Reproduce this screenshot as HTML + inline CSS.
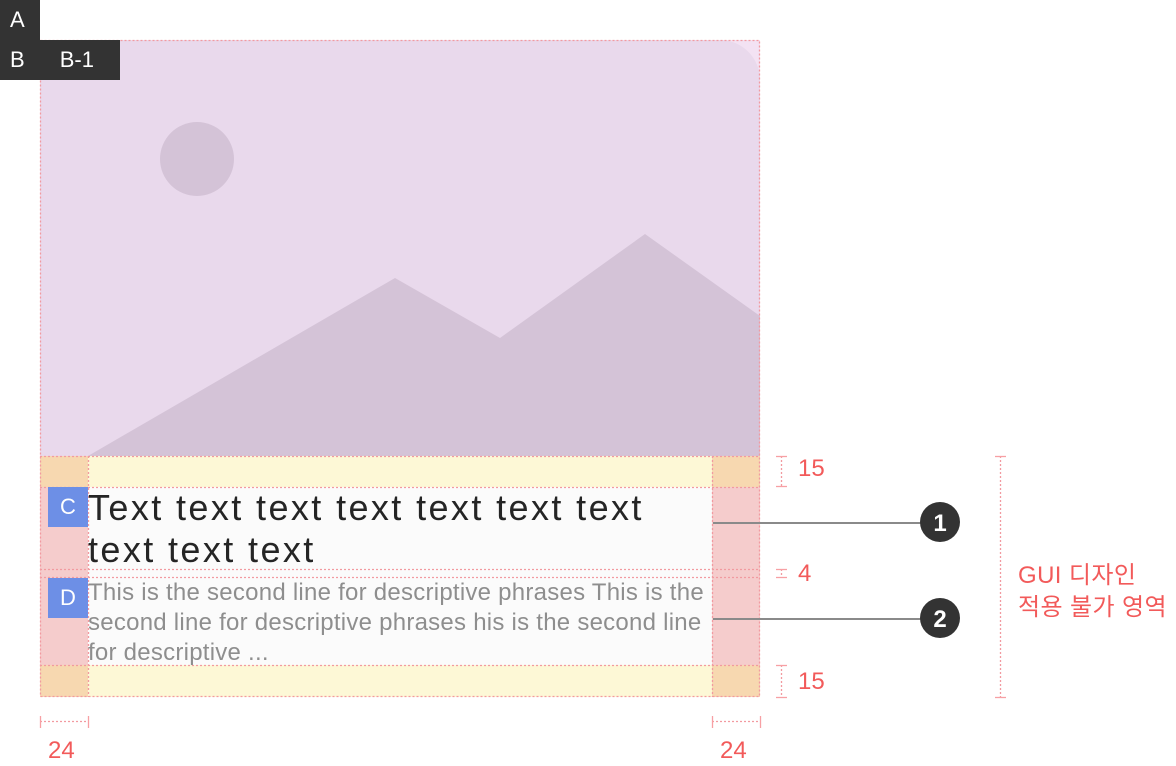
<!DOCTYPE html>
<html><head><meta charset="utf-8"><style>
*{margin:0;padding:0;box-sizing:border-box}
body{width:1176px;height:766px;background:#fff;position:relative;overflow:hidden;font-family:"Liberation Sans","Noto Sans CJK KR",sans-serif}
.a{position:absolute}
.lbl{background:#333;color:#fff;font-size:22px;line-height:40px;white-space:nowrap}
.red{color:#f25a5a;font-size:24px}
</style></head><body>
<svg class="a" style="left:0;top:0" width="1176" height="766">
<rect x="40" y="40" width="720" height="416" fill="#f3e2f3"/>
<path d="M40 40 H720 A40 40 0 0 1 760 80 V456 H40 Z" fill="#e9d9ec"/>
<circle cx="197" cy="159" r="37" fill="#d4c3d7"/>
<path d="M88 456 L395 278 L500 338 L645 234 L760 316 V456 Z" fill="#d4c3d7"/>
<rect x="40" y="456" width="720" height="241" fill="#fdf8d6"/>
<rect x="88" y="487" width="624" height="178" fill="#fbfbfb"/>
<rect x="40" y="456" width="48" height="241" fill="#f7d8b0"/>
<rect x="712" y="456" width="48" height="241" fill="#f7d8b0"/>
<rect x="40" y="487" width="48" height="178" fill="#f5cccc"/>
<rect x="712" y="487" width="48" height="178" fill="#f5cccc"/>
<g fill="none" stroke="#f29aa0" stroke-width="1.3" stroke-dasharray="2 2">
<rect x="40.5" y="40.5" width="719" height="656"/>
<line x1="40" y1="456.5" x2="760" y2="456.5"/>
<line x1="40" y1="487.5" x2="760" y2="487.5"/>
<line x1="40" y1="569.5" x2="760" y2="569.5"/>
<line x1="40" y1="577.5" x2="760" y2="577.5"/>
<line x1="40" y1="665.5" x2="760" y2="665.5"/>
<line x1="88.5" y1="456" x2="88.5" y2="697"/>
<line x1="712.5" y1="456" x2="712.5" y2="697"/>
<line x1="40" y1="721.5" x2="88" y2="721.5"/>
<line x1="712" y1="721.5" x2="760" y2="721.5"/>
<line x1="781.5" y1="456" x2="781.5" y2="487"/>
<line x1="781.5" y1="569" x2="781.5" y2="577"/>
<line x1="781.5" y1="665" x2="781.5" y2="697"/>
<line x1="1000.5" y1="456" x2="1000.5" y2="697"/>
</g>
<g stroke="#f7a0a4" stroke-width="1.3">
<line x1="40.5" y1="716" x2="40.5" y2="728"/><line x1="88.5" y1="716" x2="88.5" y2="728"/>
<line x1="712.5" y1="716" x2="712.5" y2="728"/><line x1="760.5" y1="716" x2="760.5" y2="728"/>
<line x1="776" y1="456.5" x2="787" y2="456.5"/><line x1="776" y1="486.5" x2="787" y2="486.5"/>
<line x1="776" y1="569.5" x2="787" y2="569.5"/><line x1="776" y1="577.5" x2="787" y2="577.5"/>
<line x1="776" y1="665.5" x2="787" y2="665.5"/><line x1="776" y1="697.5" x2="787" y2="697.5"/>
<line x1="995" y1="456.5" x2="1006" y2="456.5"/><line x1="995" y1="697.5" x2="1006" y2="697.5"/>
</g>
<g stroke="#8a8a8a" stroke-width="2"><line x1="713" y1="523" x2="925" y2="523"/><line x1="713" y1="619" x2="925" y2="619"/></g>
<circle cx="940" cy="522" r="20" fill="#333"/><circle cx="940" cy="618" r="20" fill="#333"/>
<text x="940" y="531" fill="#fff" font-size="24" font-weight="bold" text-anchor="middle" font-family="Liberation Sans">1</text>
<text x="940" y="627" fill="#fff" font-size="24" font-weight="bold" text-anchor="middle" font-family="Liberation Sans">2</text>
</svg>
<div class="a lbl" style="left:0;top:0;width:40px;height:40px;padding-left:10px">A</div>
<div class="a lbl" style="left:0;top:40px;width:120px;height:40px;padding-left:10px">B<span style="margin-left:35px">B-1</span></div>
<div class="a" style="left:48px;top:487px;width:40px;height:40px;background:#6d8fe6;color:#fff;font-size:22px;line-height:40px;text-align:center">C</div>
<div class="a" style="left:48px;top:578px;width:40px;height:40px;background:#6d8fe6;color:#fff;font-size:22px;line-height:40px;text-align:center">D</div>
<div class="a" style="left:88px;top:487px;width:640px;font-size:36px;letter-spacing:2.4px;line-height:42px;color:#252525;white-space:nowrap">Text text text text text text text<br>text text text</div>
<div class="a" style="left:88px;top:578px;width:630px;font-size:24px;letter-spacing:0.25px;line-height:30px;color:#8e8e8e">This is the second line for descriptive phrases This is the second line for descriptive phrases his is the second line for descriptive ...</div>
<div class="a red" style="left:798px;top:455px">15</div>
<div class="a red" style="left:798px;top:560px">4</div>
<div class="a red" style="left:798px;top:668px">15</div>
<div class="a red" style="left:48px;top:737px">24</div>
<div class="a red" style="left:720px;top:737px">24</div>
<div class="a red" style="left:1018px;top:560px;font-size:24px;letter-spacing:0.4px;line-height:32px;white-space:nowrap">GUI 디자인<br>적용 불가 영역</div>
</body></html>
